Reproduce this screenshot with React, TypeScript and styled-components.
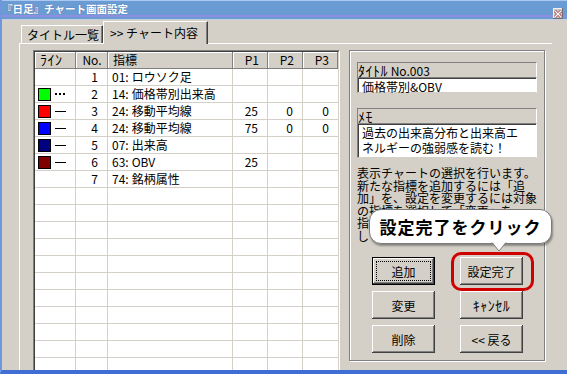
import React, { FC } from 'react'
import styled, { createGlobalStyle, css } from 'styled-components'

const GlobalStyle = createGlobalStyle`
  html, body {
    margin: 0;
    padding: 0;
    background: #d4d0c8;
  }
  body {
    font-family: "Noto Sans CJK JP", "Liberation Sans", sans-serif;
    font-size: 12px;
    color: #000;
  }
`

const Window = styled.div`
  width: 567px;
  height: 374px;
  box-sizing: border-box;
  border-left: 2px solid #7096dc;
  border-bottom: 4px solid #3f6fd4;
  background: #d4d0c8;
  display: flex;
  flex-direction: column;
  overflow: hidden;
`

const TitleBar = styled.div`
  height: 20px;
  flex: none;
  display: flex;
  align-items: flex-start;
  justify-content: space-between;
  padding-right: 4px;
  background: linear-gradient(
    #a9c9f2 0 1px,
    #6a9bd3 1px 15px,
    #8f8fe2 15px 17px,
    #6a9bd3 17px 19px,
    #c3cfe2 19px 20px
  );
`

const Title = styled.span`
  color: #fff;
  font-size: 10.5px;
  font-weight: bold;
  line-height: 18px;
  white-space: nowrap;
  text-shadow: 0 0 1px rgba(40, 60, 120, 0.6);
`

const CloseBox = styled.span`
  width: 10px;
  height: 11px;
  margin-top: 8px;
  background: #c9c6c2;
  box-shadow: inset -1px -1px #6e6e7a, inset 1px 1px #f2f2f2;
  display: flex;
  align-items: center;
  justify-content: center;
`

const Body = styled.div`
  flex: 1;
  padding-left: 17px;
  display: flex;
  flex-direction: column;
  min-height: 0;
`

const TabBar = styled.div`
  display: flex;
  align-items: flex-end;
  margin: 1px 0 0 2px;
  position: relative;
  z-index: 1;
`

const Tab = styled.div<{ $active?: boolean }>`
  box-sizing: border-box;
  display: flex;
  align-items: center;
  white-space: nowrap;
  background: #d4d0c8;
  border-top: 1px solid #fff;
  border-left: 1px solid #fff;
  border-right: 1px solid #404040;
  box-shadow: inset -1px 0 #808080;
  line-height: 14px;
  ${p =>
    p.$active
      ? css`
          width: 105px;
          height: 23px;
          margin-bottom: -1px;
          padding-left: 6px;
        `
      : css`
          width: 82px;
          height: 18px;
          padding-left: 5px;
        `}
`

const Panel = styled.div`
  flex: 1;
  margin-right: 15px;
  border-top: 1px solid #fff;
  border-left: 1px solid #fff;
  padding: 6px 0 0 13px;
  display: flex;
  align-items: flex-start;
  gap: 9px;
`

const GridFrame = styled.div`
  flex: none;
  border-top: 1px solid #808080;
  border-left: 1px solid #808080;
  border-right: 1px solid #fff;
  border-bottom: 1px solid #fff;
`

const Grid = styled.div`
  height: 330px;
  overflow: hidden;
  background: #fff;
  border-top: 1px solid #404040;
  border-left: 1px solid #404040;
  border-right: 1px solid #d4d0c8;
  display: grid;
  grid-template-columns: 41px 32px 125px 35px 35px 35px;
  grid-auto-rows: 17px;
  align-content: start;
`

const HeadCell = styled.div<{ $align?: string }>`
  background: #d4d0c8;
  box-shadow: inset -1px -1px #808080, inset 1px 1px #fff;
  line-height: 16px;
  white-space: nowrap;
  text-align: ${p => p.$align || 'left'};
  padding: 0 ${p => (p.$align === 'right' ? '9px' : '5px')} 0 5px;
`

const Cell = styled.div<{ $align?: string; $last?: boolean }>`
  box-sizing: border-box;
  border-bottom: 1px solid #d4d0c8;
  border-right: ${p => (p.$last ? 'none' : '1px solid #d4d0c8')};
  line-height: 16px;
  white-space: nowrap;
  overflow: hidden;
  padding: 0 9px 0 4px;
  display: flex;
  align-items: center;
  justify-content: ${p => (p.$align === 'right' ? 'flex-end' : 'flex-start')};
`

const LineCell = styled(Cell)`
  padding: 0 0 0 3px;
  gap: 4px;
`

const Swatch = styled.span<{ $color: string }>`
  width: 11px;
  height: 11px;
  border: 1px solid #000;
  background: ${p => p.$color};
`

const Dash = styled.span`
  width: 11px;
  height: 1px;
  background: #000;
`

const Dots = styled.span`
  display: flex;
  gap: 2px;
  & > i {
    width: 2px;
    height: 2px;
    background: #000;
  }
`

const Code = styled.span`
  margin-right: 3px;
`

/* half-width katakana are narrow in Noto; enlarge a little to match the bitmap UI font */
const Kana = styled.span`
  font-size: 14px;
  line-height: 1;
  letter-spacing: 0.5px;
`

const Group = styled.div`
  position: relative;
  flex: none;
  width: 196px;
  height: 311px;
  box-sizing: border-box;
  border: 1px solid #808080;
  box-shadow: inset 1px 1px #fff, 1px 1px #fff;
  padding: 11px 0 0 7px;
`

const FieldLabel = styled.div`
  width: 180px;
  height: 15px;
  box-sizing: border-box;
  border-top: 1px solid #808080;
  border-left: 1px solid #808080;
  border-right: 1px solid #fff;
  line-height: 14px;
  white-space: nowrap;
`

const TextBox = styled.div<{ $h: number }>`
  width: 180px;
  height: ${p => p.$h}px;
  box-sizing: border-box;
  background: #fff;
  border-top: 1px solid #808080;
  border-left: 1px solid #808080;
  border-right: 1px solid #fff;
  border-bottom: 1px solid #d4d0c8;
  box-shadow: inset 1px 1px #404040;
  padding: 1px 0 0 4px;
  line-height: 15px;
  white-space: pre-line;
  margin-bottom: 15px;
`

const Desc = styled.div`
  margin-top: -6px;
  line-height: 12.5px;
  white-space: pre-line;
`

const Buttons = styled.div`
  display: grid;
  grid-template-columns: 63px 63px;
  grid-auto-rows: 28px;
  column-gap: 25px;
  row-gap: 6px;
  margin: 15px 0 0 15px;
`

const Btn = styled.button<{ $default?: boolean; $highlight?: boolean }>`
  position: relative;
  width: 63px;
  height: 28px;
  margin: 0;
  padding: 0;
  box-sizing: border-box;
  font-family: inherit;
  font-size: 12px;
  color: #000;
  background: #d4d0c8;
  border: none;
  box-shadow: inset -1px -1px #404040, inset 1px 1px #fff, inset -2px -2px #808080;
  white-space: nowrap;
  ${p =>
    p.$default &&
    css`
      border: 1px solid #000;
      &::before {
        content: '';
        position: absolute;
        inset: 3px;
        border: 1px dotted #000;
      }
    `}
  ${p =>
    p.$highlight &&
    css`
      &::after {
        content: '';
        position: absolute;
        left: -9px;
        top: -5px;
        right: -11px;
        bottom: -6px;
        border: 3px solid #d00000;
        border-radius: 10px;
      }
    `}
`

const Callout = styled.div`
  position: absolute;
  left: 19px;
  top: 158px;
  width: 183px;
  height: 35px;
  box-sizing: border-box;
  background: #fff;
  border: 1px solid #7a7a7a;
  border-radius: 12px;
  box-shadow: 1px 2px 2px rgba(0, 0, 0, 0.35);
  display: flex;
  align-items: center;
  justify-content: center;
  font-size: 17px;
  font-weight: bold;
  letter-spacing: 1px;
  white-space: nowrap;
  z-index: 2;
`

const Tail = styled.svg`
  position: absolute;
  left: 121px;
  top: 100%;
  margin-top: -1px;
`

type Row = {
  no: number
  code: string
  name: string
  color?: string
  line?: 'solid' | 'dot'
  p1?: string
  p2?: string
  p3?: string
}

const rows: Row[] = [
  { no: 1, code: '01:', name: 'ロウソク足' },
  { no: 2, code: '14:', name: '価格帯別出来高', color: '#00ff00', line: 'dot' },
  { no: 3, code: '24:', name: '移動平均線', color: '#ff0000', line: 'solid', p1: '25', p2: '0', p3: '0' },
  { no: 4, code: '24:', name: '移動平均線', color: '#0000ff', line: 'solid', p1: '75', p2: '0', p3: '0' },
  { no: 5, code: '07:', name: '出来高', color: '#000080', line: 'solid' },
  { no: 6, code: '63:', name: 'OBV', color: '#800000', line: 'solid', p1: '25' },
  { no: 7, code: '74:', name: '銘柄属性' }
]

const EMPTY_ROWS = 12

const desc = `表示チャートの選択を行います。
新たな指標を追加するには「追
加」を、設定を変更するには対象
の指標を選択して「変更」を、
指標を削除するには「削除」を
してください。`

const IndicatorGrid: FC = () => (
  <GridFrame>
    <Grid>
      <HeadCell>
        <Kana>ﾗｲﾝ</Kana>
      </HeadCell>
      <HeadCell $align="center">No.</HeadCell>
      <HeadCell>指標</HeadCell>
      <HeadCell $align="right">P1</HeadCell>
      <HeadCell $align="right">P2</HeadCell>
      <HeadCell $align="right">P3</HeadCell>
      {rows.map(r => (
        <React.Fragment key={r.no}>
          <LineCell>
            {r.color && <Swatch $color={r.color} />}
            {r.line === 'solid' && <Dash />}
            {r.line === 'dot' && (
              <Dots>
                <i />
                <i />
                <i />
              </Dots>
            )}
          </LineCell>
          <Cell $align="right">{r.no}</Cell>
          <Cell>
            <Code>{r.code}</Code>
            {r.name}
          </Cell>
          <Cell $align="right">{r.p1}</Cell>
          <Cell $align="right">{r.p2}</Cell>
          <Cell $align="right" $last>
            {r.p3}
          </Cell>
        </React.Fragment>
      ))}
      {Array.from({ length: EMPTY_ROWS }).map((_, i) => (
        <React.Fragment key={'e' + i}>
          <Cell />
          <Cell />
          <Cell />
          <Cell />
          <Cell />
          <Cell $last />
        </React.Fragment>
      ))}
    </Grid>
  </GridFrame>
)

const App: FC = () => (
  <>
    <GlobalStyle />
    <Window>
      <TitleBar>
        <Title>『日足』チャート画面設定</Title>
        <CloseBox>
          <svg width="8" height="8" viewBox="0 0 8 8">
            <path d="M1 1 L7 7 M7 1 L1 7" stroke="#a33" strokeWidth="2.6" />
            <path d="M1 1 L7 7 M7 1 L1 7" stroke="#fff" strokeWidth="1.4" />
          </svg>
        </CloseBox>
      </TitleBar>
      <Body>
        <TabBar>
          <Tab>タイトル一覧</Tab>
          <Tab $active>&gt;&gt; チャート内容</Tab>
        </TabBar>
        <Panel>
          <IndicatorGrid />
          <Group>
            <FieldLabel>
              <Kana>ﾀｲﾄﾙ</Kana> No.003
            </FieldLabel>
            <TextBox $h={16}>価格帯別&amp;OBV</TextBox>
            <FieldLabel>
              <Kana>ﾒﾓ</Kana>
            </FieldLabel>
            <TextBox $h={35}>{'過去の出来高分布と出来高エ\nネルギーの強弱感を読む！'}</TextBox>
            <Desc>{desc}</Desc>
            <Buttons>
              <Btn $default>追加</Btn>
              <Btn $highlight>設定完了</Btn>
              <Btn>変更</Btn>
              <Btn>
                <Kana>ｷｬﾝｾﾙ</Kana>
              </Btn>
              <Btn>削除</Btn>
              <Btn>&lt;&lt; 戻る</Btn>
            </Buttons>
            <Callout>
              設定完了をクリック
              <Tail width="16" height="10" viewBox="0 0 16 10">
                <polygon points="1,0 8,9 15,0" fill="#fff" />
                <polyline points="1,0.5 8,9 15,0.5" fill="none" stroke="#7a7a7a" strokeWidth="1" />
              </Tail>
            </Callout>
          </Group>
        </Panel>
      </Body>
    </Window>
  </>
)

export default App
